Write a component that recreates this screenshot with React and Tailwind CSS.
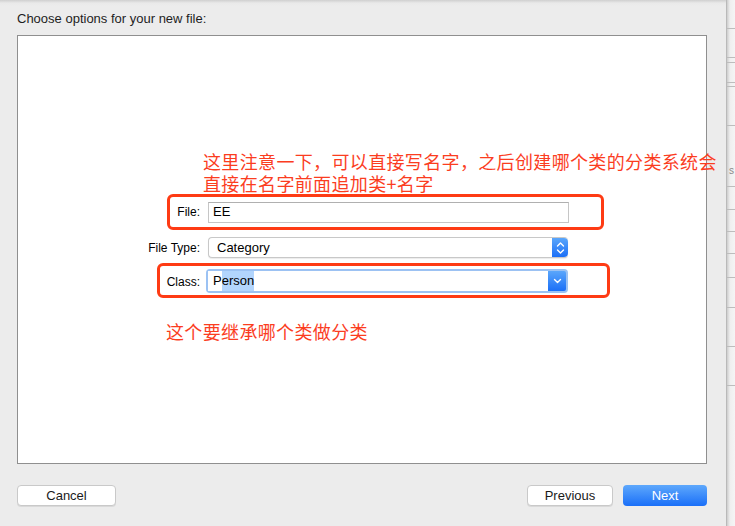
import React from 'react'

const ui = { fontFamily: '"Liberation Sans", "Helvetica Neue", Arial, sans-serif' }
const cjk = { fontFamily: '"Noto Sans CJK SC", "Liberation Sans", sans-serif' }

// y positions of the row dividers in the window peeking out on the right
const stripLines = [28, 57, 62, 82, 86, 125, 186, 209, 231, 253, 277, 307, 346, 385]

function Stepper() {
  return (
    <div className="w-[16px] self-stretch rounded-r-[4px] bg-[linear-gradient(to_bottom,#5aa6fb,#1b6ff7)] flex items-center justify-center">
      <svg width="9" height="14" viewBox="0 0 9 14" fill="none" stroke="white" strokeWidth="1.4" strokeLinecap="round" strokeLinejoin="round">
        <path d="M1.5 5 L4.5 2 L7.5 5" />
        <path d="M1.5 9 L4.5 12 L7.5 9" />
      </svg>
    </div>
  )
}

function ComboArrow() {
  return (
    <div className="w-[18px] self-stretch rounded-r-[2px] bg-[linear-gradient(to_bottom,#5aa6fb,#1b6ff7)] flex items-center justify-center">
      <svg width="9" height="6" viewBox="0 0 9 6" fill="none" stroke="white" strokeWidth="1.4" strokeLinecap="round" strokeLinejoin="round">
        <path d="M1.5 1.5 L4.5 4.5 L7.5 1.5" />
      </svg>
    </div>
  )
}

function Button({ children, primary, width }) {
  return (
    <button
      className={
        primary
          ? 'h-[21px] rounded-[4px] bg-[linear-gradient(to_bottom,#5ea8fc,#1a6ff8)] text-white text-[13px] leading-none'
          : 'h-[21px] rounded-[4px] bg-white border border-[#c9c9c9] shadow-[0_1px_0_rgba(0,0,0,0.08)] text-[#1a1a1a] text-[13px] leading-none'
      }
      style={{ width }}
    >
      {children}
    </button>
  )
}

export default function App() {
  return (
    <div className="flex w-[735px] h-[526px] overflow-hidden text-black" style={ui}>
      {/* Sheet */}
      <div className="w-[727px] h-full flex flex-col bg-[linear-gradient(to_bottom,#cfcfcf,#e9e9e9_3px,#ececec_6px)] border-r border-[#b9b9b9]">
        <div className="pt-[11px] pl-[17px] h-[27px] text-[13px] leading-[16px] text-[#1e1e1e]">
          Choose options for your new file:
        </div>
        <div className="mt-[8px] ml-[17px] w-[690px] h-[429px] bg-white border border-[#8f8f8f] flex flex-col">
          {/* annotation 1 */}
          <div className="mt-[114px] ml-[185px] text-[18px] leading-[22px] tracking-[0.35px] text-[#fb3d1f] whitespace-nowrap" style={cjk}>
            <div>这里注意一下，可以直接写名字，之后创建哪个类的分类系统会</div>
            <div>直接在名字前面追加类+名字</div>
          </div>

          {/* File */}
          <div className="ml-[149px] w-[437px] h-[36px] border-[3px] border-[#fe3b14] rounded-[6px] flex items-center">
            <div className="w-[30px] text-right text-[12px]">File:</div>
            <div className="ml-[8px] w-[361px] h-[21px] border border-[#c6c6c6] border-t-[#b0b0b0] flex items-center pl-[4px] text-[13px]">
              EE
            </div>
          </div>

          {/* File Type */}
          <div className="mt-[7px] h-[21px] flex items-center">
            <div className="w-[182px] text-right text-[12px]">File Type:</div>
            <div className="ml-[8px] w-[360px] h-[21px] flex rounded-[4px] border border-[#c8c8c8] border-r-0 bg-white shadow-[0_1px_1px_rgba(0,0,0,0.08)]">
              <div className="flex-1 flex items-center pl-[8px] text-[13px]">Category</div>
              <Stepper />
            </div>
          </div>

          {/* Class */}
          <div className="mt-[5px] ml-[139px] w-[453px] h-[35px] border-[3px] border-[#fe3b14] rounded-[6px] flex items-center">
            <div className="w-[40px] text-right text-[12px] pt-[2px]">Class:</div>
            <div className="ml-[6px] mt-[1px] w-[362px] h-[24px] rounded-[4px] bg-[#9cc2f3] p-[2px] flex">
              <div className="flex-1 flex items-center bg-white pl-[5px] text-[13px]">
                P<span className="bg-[#b2d5fd]">erson</span>
              </div>
              <ComboArrow />
            </div>
          </div>

          {/* annotation 2 */}
          <div className="mt-[22px] ml-[148px] text-[18px] leading-[22px] tracking-[0.35px] text-[#fb3d1f] whitespace-nowrap" style={cjk}>
            这个要继承哪个类做分类
          </div>
        </div>

        {/* footer */}
        <div className="mt-[21px] px-[17px] w-[724px] flex items-center">
          <Button width={99}>Cancel</Button>
          <div className="flex-1" />
          <Button width={86}>Previous</Button>
          <div className="w-[10px]" />
          <Button primary width={84}>Next</Button>
        </div>
      </div>

      {/* Window behind the sheet */}
      <div className="flex-1 h-full relative bg-[linear-gradient(to_right,#cdcdcd,#efefef_3px,#f5f5f5)]">
        {stripLines.map((y) => (
          <div key={y} className="absolute left-0 right-0 h-px bg-[#bdbdbd]" style={{ top: y }} />
        ))}
        <div className="absolute left-[2px] top-[166px] text-[10px] text-[#8a8a8a] leading-none">s</div>
      </div>
    </div>
  )
}
